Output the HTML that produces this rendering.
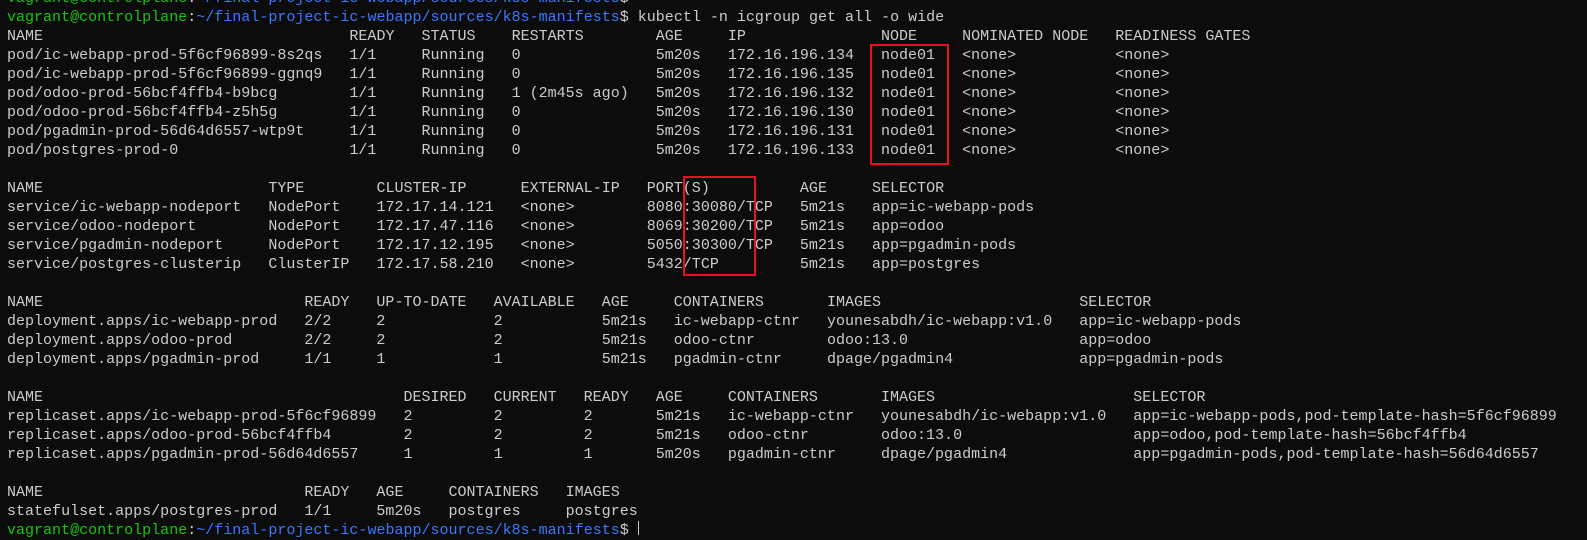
<!DOCTYPE html>
<html><head><meta charset="utf-8"><style>
html,body{margin:0;padding:0;background:#0c0c0c;width:1587px;height:528px;overflow:hidden}
#t{position:absolute;left:7px;top:-11.2px;font-family:"Liberation Mono",monospace;font-size:15.02px;color:#cccccc}
.l{height:19.03px;line-height:19.03px;white-space:pre;overflow:visible}
.l span{display:inline-block}
.g{color:#16c60c}.b{color:#3b78ff}
.box{position:absolute;border:2px solid #e81123}
.cur{position:absolute;left:638px;top:521px;width:1px;height:14px;background:#ccc}
</style></head><body>
<div id="t"><div class="l"><span class="g">vagrant@controlplane</span>:<span class="b">~/final-project-ic-webapp/sources/k8s-manifests</span>$</div><div class="l"><span class="g">vagrant@controlplane</span>:<span class="b">~/final-project-ic-webapp/sources/k8s-manifests</span>$ kubectl -n icgroup get all -o wide</div><div class="l"><span style="width:38ch">NAME</span><span style="width:8ch">READY</span><span style="width:10ch">STATUS</span><span style="width:16ch">RESTARTS</span><span style="width:8ch">AGE</span><span style="width:17ch">IP</span><span style="width:9ch">NODE</span><span style="width:17ch">NOMINATED NODE</span>READINESS GATES</div><div class="l"><span style="width:38ch">pod/ic-webapp-prod-5f6cf96899-8s2qs</span><span style="width:8ch">1/1</span><span style="width:10ch">Running</span><span style="width:16ch">0</span><span style="width:8ch">5m20s</span><span style="width:17ch">172.16.196.134</span><span style="width:9ch">node01</span><span style="width:17ch">&lt;none&gt;</span>&lt;none&gt;</div><div class="l"><span style="width:38ch">pod/ic-webapp-prod-5f6cf96899-ggnq9</span><span style="width:8ch">1/1</span><span style="width:10ch">Running</span><span style="width:16ch">0</span><span style="width:8ch">5m20s</span><span style="width:17ch">172.16.196.135</span><span style="width:9ch">node01</span><span style="width:17ch">&lt;none&gt;</span>&lt;none&gt;</div><div class="l"><span style="width:38ch">pod/odoo-prod-56bcf4ffb4-b9bcg</span><span style="width:8ch">1/1</span><span style="width:10ch">Running</span><span style="width:16ch">1 (2m45s ago)</span><span style="width:8ch">5m20s</span><span style="width:17ch">172.16.196.132</span><span style="width:9ch">node01</span><span style="width:17ch">&lt;none&gt;</span>&lt;none&gt;</div><div class="l"><span style="width:38ch">pod/odoo-prod-56bcf4ffb4-z5h5g</span><span style="width:8ch">1/1</span><span style="width:10ch">Running</span><span style="width:16ch">0</span><span style="width:8ch">5m20s</span><span style="width:17ch">172.16.196.130</span><span style="width:9ch">node01</span><span style="width:17ch">&lt;none&gt;</span>&lt;none&gt;</div><div class="l"><span style="width:38ch">pod/pgadmin-prod-56d64d6557-wtp9t</span><span style="width:8ch">1/1</span><span style="width:10ch">Running</span><span style="width:16ch">0</span><span style="width:8ch">5m20s</span><span style="width:17ch">172.16.196.131</span><span style="width:9ch">node01</span><span style="width:17ch">&lt;none&gt;</span>&lt;none&gt;</div><div class="l"><span style="width:38ch">pod/postgres-prod-0</span><span style="width:8ch">1/1</span><span style="width:10ch">Running</span><span style="width:16ch">0</span><span style="width:8ch">5m20s</span><span style="width:17ch">172.16.196.133</span><span style="width:9ch">node01</span><span style="width:17ch">&lt;none&gt;</span>&lt;none&gt;</div><div class="l"> </div><div class="l"><span style="width:29ch">NAME</span><span style="width:12ch">TYPE</span><span style="width:16ch">CLUSTER-IP</span><span style="width:14ch">EXTERNAL-IP</span><span style="width:17ch">PORT(S)</span><span style="width:8ch">AGE</span>SELECTOR</div><div class="l"><span style="width:29ch">service/ic-webapp-nodeport</span><span style="width:12ch">NodePort</span><span style="width:16ch">172.17.14.121</span><span style="width:14ch">&lt;none&gt;</span><span style="width:17ch">8080:30080/TCP</span><span style="width:8ch">5m21s</span>app=ic-webapp-pods</div><div class="l"><span style="width:29ch">service/odoo-nodeport</span><span style="width:12ch">NodePort</span><span style="width:16ch">172.17.47.116</span><span style="width:14ch">&lt;none&gt;</span><span style="width:17ch">8069:30200/TCP</span><span style="width:8ch">5m21s</span>app=odoo</div><div class="l"><span style="width:29ch">service/pgadmin-nodeport</span><span style="width:12ch">NodePort</span><span style="width:16ch">172.17.12.195</span><span style="width:14ch">&lt;none&gt;</span><span style="width:17ch">5050:30300/TCP</span><span style="width:8ch">5m21s</span>app=pgadmin-pods</div><div class="l"><span style="width:29ch">service/postgres-clusterip</span><span style="width:12ch">ClusterIP</span><span style="width:16ch">172.17.58.210</span><span style="width:14ch">&lt;none&gt;</span><span style="width:17ch">5432/TCP</span><span style="width:8ch">5m21s</span>app=postgres</div><div class="l"> </div><div class="l"><span style="width:33ch">NAME</span><span style="width:8ch">READY</span><span style="width:13ch">UP-TO-DATE</span><span style="width:12ch">AVAILABLE</span><span style="width:8ch">AGE</span><span style="width:17ch">CONTAINERS</span><span style="width:28ch">IMAGES</span>SELECTOR</div><div class="l"><span style="width:33ch">deployment.apps/ic-webapp-prod</span><span style="width:8ch">2/2</span><span style="width:13ch">2</span><span style="width:12ch">2</span><span style="width:8ch">5m21s</span><span style="width:17ch">ic-webapp-ctnr</span><span style="width:28ch">younesabdh/ic-webapp:v1.0</span>app=ic-webapp-pods</div><div class="l"><span style="width:33ch">deployment.apps/odoo-prod</span><span style="width:8ch">2/2</span><span style="width:13ch">2</span><span style="width:12ch">2</span><span style="width:8ch">5m21s</span><span style="width:17ch">odoo-ctnr</span><span style="width:28ch">odoo:13.0</span>app=odoo</div><div class="l"><span style="width:33ch">deployment.apps/pgadmin-prod</span><span style="width:8ch">1/1</span><span style="width:13ch">1</span><span style="width:12ch">1</span><span style="width:8ch">5m21s</span><span style="width:17ch">pgadmin-ctnr</span><span style="width:28ch">dpage/pgadmin4</span>app=pgadmin-pods</div><div class="l"> </div><div class="l"><span style="width:44ch">NAME</span><span style="width:10ch">DESIRED</span><span style="width:10ch">CURRENT</span><span style="width:8ch">READY</span><span style="width:8ch">AGE</span><span style="width:17ch">CONTAINERS</span><span style="width:28ch">IMAGES</span>SELECTOR</div><div class="l"><span style="width:44ch">replicaset.apps/ic-webapp-prod-5f6cf96899</span><span style="width:10ch">2</span><span style="width:10ch">2</span><span style="width:8ch">2</span><span style="width:8ch">5m21s</span><span style="width:17ch">ic-webapp-ctnr</span><span style="width:28ch">younesabdh/ic-webapp:v1.0</span>app=ic-webapp-pods,pod-template-hash=5f6cf96899</div><div class="l"><span style="width:44ch">replicaset.apps/odoo-prod-56bcf4ffb4</span><span style="width:10ch">2</span><span style="width:10ch">2</span><span style="width:8ch">2</span><span style="width:8ch">5m21s</span><span style="width:17ch">odoo-ctnr</span><span style="width:28ch">odoo:13.0</span>app=odoo,pod-template-hash=56bcf4ffb4</div><div class="l"><span style="width:44ch">replicaset.apps/pgadmin-prod-56d64d6557</span><span style="width:10ch">1</span><span style="width:10ch">1</span><span style="width:8ch">1</span><span style="width:8ch">5m20s</span><span style="width:17ch">pgadmin-ctnr</span><span style="width:28ch">dpage/pgadmin4</span>app=pgadmin-pods,pod-template-hash=56d64d6557</div><div class="l"> </div><div class="l"><span style="width:33ch">NAME</span><span style="width:8ch">READY</span><span style="width:8ch">AGE</span><span style="width:13ch">CONTAINERS</span>IMAGES</div><div class="l"><span style="width:33ch">statefulset.apps/postgres-prod</span><span style="width:8ch">1/1</span><span style="width:8ch">5m20s</span><span style="width:13ch">postgres</span>postgres</div><div class="l"><span class="g">vagrant@controlplane</span>:<span class="b">~/final-project-ic-webapp/sources/k8s-manifests</span>$ </div></div>
<div class="box" style="left:870px;top:44px;width:75px;height:117px"></div>
<div class="box" style="left:683px;top:176px;width:69px;height:96px"></div>
<div class="cur"></div>
</body></html>
